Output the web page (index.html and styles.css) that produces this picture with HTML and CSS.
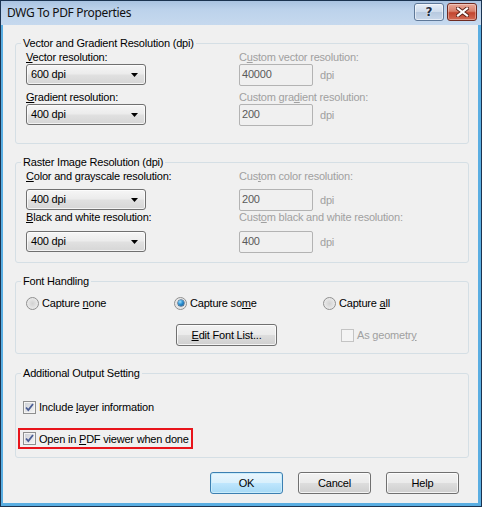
FILE: index.html
```html
<!DOCTYPE html>
<html>
<head>
<meta charset="utf-8">
<link rel="stylesheet" href="styles.css">
</head>
<body>
<div class="window">
  <div class="titlebar">
    <span class="title">DWG To PDF Properties</span>
    <div class="caption-btns">
      <div class="cbtn help"><span>?</span></div>
      <div class="cbtn close">
        <svg width="13" height="10" viewBox="0 0 13 10"><path d="M2 1.5L11 8.5M11 1.5L2 8.5" stroke="#5a2218" stroke-width="4" stroke-linecap="square"/><path d="M2 1.5L11 8.5M11 1.5L2 8.5" stroke="#fff" stroke-width="2.2" stroke-linecap="square"/></svg>
      </div>
    </div>
  </div>
  <div class="client">
    <fieldset class="group g1">
      <legend>Vector and Gradient Resolution (dpi)</legend>
      <div class="res-grid rows1">
        <div class="lbl end"><u>V</u>ector resolution:</div>
        <div class="lbl end dis">C<u>u</u>stom vector resolution:</div>
        <div class="combo"><span>600 dpi</span><svg width="7" height="4" viewBox="0 0 7 4"><path d="M0 0H7L3.5 4Z" fill="#000"/></svg></div>
        <div class="custom"><div class="edit">40000</div><span class="unit">dpi</span></div>
        <div class="lbl end"><u>G</u>radient resolution:</div>
        <div class="lbl end dis">Custom gra<u>d</u>ient resolution:</div>
        <div class="combo"><span>400 dpi</span><svg width="7" height="4" viewBox="0 0 7 4"><path d="M0 0H7L3.5 4Z" fill="#000"/></svg></div>
        <div class="custom"><div class="edit">200</div><span class="unit">dpi</span></div>
      </div>
    </fieldset>

    <fieldset class="group g2">
      <legend>Raster Image Resolution (dpi)</legend>
      <div class="res-grid rows2">
        <div class="lbl top1"><u>C</u>olor and grayscale resolution:</div>
        <div class="lbl top1 dis">Cus<u>t</u>om color resolution:</div>
        <div class="combo"><span>400 dpi</span><svg width="7" height="4" viewBox="0 0 7 4"><path d="M0 0H7L3.5 4Z" fill="#000"/></svg></div>
        <div class="custom"><div class="edit">200</div><span class="unit">dpi</span></div>
        <div class="lbl"><u>B</u>lack and white resolution:</div>
        <div class="lbl dis">Cust<u>o</u>m black and white resolution:</div>
        <div class="combo"><span>400 dpi</span><svg width="7" height="4" viewBox="0 0 7 4"><path d="M0 0H7L3.5 4Z" fill="#000"/></svg></div>
        <div class="custom"><div class="edit">400</div><span class="unit">dpi</span></div>
      </div>
    </fieldset>

    <fieldset class="group g3">
      <legend>Font Handling</legend>
      <div class="font-grid">
        <div class="opt"><span class="radio"></span><span>Capture <u>n</u>one</span></div>
        <div class="opt"><span class="radio on"></span><span>Capture so<u>m</u>e</span></div>
        <div class="opt"><span class="radio"></span><span>Capture <u>a</u>ll</span></div>
        <div></div>
        <div class="btn-cell"><div class="btn edit-font"><u>E</u>dit Font List...</div></div>
        <div class="geo-cell"><div class="opt dis"><span class="check off"></span><span>As geometr<u>y</u></span></div></div>
      </div>
    </fieldset>

    <fieldset class="group g4">
      <legend>Additional Output Setting</legend>
      <div class="opt row-a"><span class="check"><svg width="11" height="11" viewBox="0 0 11 11"><path d="M2 5.5L4.3 8L9 2" stroke="#4a5d94" stroke-width="1.8" fill="none"/></svg></span><span>Include <u>l</u>ayer information</span></div>
      <div class="opt row-b"><span class="check"><svg width="11" height="11" viewBox="0 0 11 11"><path d="M2 5.5L4.3 8L9 2" stroke="#4a5d94" stroke-width="1.8" fill="none"/></svg></span><span>Open in <u>P</u>DF viewer when done</span></div>
    </fieldset>

    <div class="actions">
      <div class="btn dlg default">OK</div>
      <div class="btn dlg">Cancel</div>
      <div class="btn dlg">Help</div>
    </div>
  </div>
</div>
</body>
</html>
```

FILE: styles.css
```css
* { box-sizing: border-box; }
html, body { margin: 0; padding: 0; }
body {
  font-family: "Liberation Sans", Arial, sans-serif;
  font-size: 11px;
  line-height: 13px;
  letter-spacing: -0.2px;
  color: #000;
  background: #ffffff;
}
u { text-decoration: underline; text-underline-offset: 1px; }

.window {
  width: 482px;
  height: 507px;
  border: 1px solid #1b3350;
  background: #5aaee2;
  display: flex;
  flex-direction: column;
}

.titlebar {
  height: 24px;
  flex: none;
  display: flex;
  align-items: flex-start;
  padding: 2px 4px 0 6px;
  background: linear-gradient(#a9c3e1 0%, #bcd2eb 35%, #c6d9ee 100%);
}
.title {
  font-family: "Noto Sans", "Open Sans", sans-serif;
  font-size: 12px;
  line-height: 16px;
  letter-spacing: -0.35px;
  margin-top: 2px;
  color: #111;
}
.caption-btns {
  margin-left: auto;
  display: flex;
  gap: 3px;
}
.cbtn {
  width: 30px;
  height: 18px;
  border-radius: 3px;
  display: flex;
  align-items: center;
  justify-content: center;
}
.cbtn.help {
  border: 1px solid #5e7898;
  background: linear-gradient(#e6eef8 0%, #cfdcec 48%, #b7c9df 52%, #c8d7ea 100%);
  box-shadow: inset 0 0 0 1px rgba(255,255,255,0.55);
}
.cbtn.help span {
  font-family: "DejaVu Sans", sans-serif;
  font-weight: bold;
  font-size: 12px;
  line-height: 12px;
  color: #1f2c40;
  text-shadow: 0 0 2px #fff;
}
.cbtn.close {
  border: 1px solid #6e2a20;
  background: linear-gradient(#eaa998 0%, #d8806c 45%, #c2442e 55%, #d36b55 100%);
  box-shadow: inset 0 0 0 1px rgba(255,255,255,0.35);
}

.client {
  flex: 1;
  margin: 0 3px 3px 2px;
  background: #f0f0f0;
  display: flex;
  flex-direction: column;
  padding-top: 12px;
}

.group {
  margin: 0 0 0 12px;
  width: 454px;
  border: 1px solid #d5dfe5;
  border-radius: 3px;
  padding: 0 10px 17px 10px;
  min-width: 0;
}
.group legend {
  padding: 0 2px;
  margin-left: -5px;
  line-height: 13px;
}
.g2 { margin-top: 12px; padding-bottom: 9px; }
.g3 { margin-top: 12px; padding-bottom: 7px; }
.g4 { margin-top: 13px; padding: 0 8px 8px 7px; }
.g4 legend { margin-left: -2px; }

.res-grid {
  display: grid;
  grid-template-columns: 213px 1fr;
}
.rows1 { grid-template-rows: 14px 22px 18px 22px; }
.rows2 { grid-template-rows: 20px 22px 20px 22px; }
.lbl { line-height: 13px; white-space: nowrap; align-self: start; }
.lbl.end { align-self: end; }
.lbl.top1 { margin-top: 1px; }
.dis { color: #a0a0a0; }

.combo {
  width: 120px;
  height: 21px;
  align-self: start;
  border: 1px solid #707070;
  border-radius: 3px;
  background: linear-gradient(#f6f6f6 0%, #ececec 45%, #e0e0e0 55%, #d6d6d6 100%);
  box-shadow: inset 0 0 0 1px rgba(255,255,255,0.7);
  display: flex;
  align-items: center;
  padding: 0 4px 0 4px;
}
.combo span { flex: 1; }
.combo svg { margin-right: 3px; }

.custom {
  display: flex;
  align-items: center;
  gap: 7px;
}
.edit {
  width: 74px;
  height: 22px;
  border: 1px solid #b3b3b3;
  border-radius: 2px;
  background: #f0f0f0;
  color: #5a5a5a;
  padding: 3px 2px 0 2px;
}
.unit { color: #a0a0a0; margin-top: 1px; }

.font-grid {
  display: grid;
  grid-template-columns: 148px 149px 1fr;
  grid-template-rows: 22px 22px;
  row-gap: 14px;
}
.opt {
  display: flex;
  align-items: center;
  gap: 3px;
  white-space: nowrap;
  line-height: 14px;
}
.font-grid > .opt { align-self: end; }
.radio {
  width: 13px;
  height: 13px;
  border-radius: 50%;
  border: 1px solid #8f8f8f;
  background: radial-gradient(circle at 50% 50%, #d2d2d2 0%, #e4e4e4 55%, #f6f6f6 100%);
  position: relative;
  flex: none;
}
.radio.on::after {
  content: "";
  position: absolute;
  left: 2.5px;
  top: 2.5px;
  width: 6px;
  height: 6px;
  border-radius: 50%;
  background: radial-gradient(circle at 35% 30%, #9be0ff 0%, #2a8ed0 45%, #0b4c87 100%);
  box-shadow: 0 0 0 0.5px #123f6c;
}
.btn-cell { display: flex; align-items: center; padding-left: 2px; }
.geo-cell { display: flex; align-items: center; padding-left: 18px; }

.check {
  width: 13px;
  height: 13px;
  border: 1px solid #8e8f8f;
  background: linear-gradient(135deg, #cbcfd5 0%, #f6f6f6 100%);
  box-shadow: inset 0 0 0 1px #f4f4f4;
  display: flex;
  align-items: center;
  justify-content: center;
  flex: none;
}
.check.off {
  border-color: #c4c4c4;
  background: #f4f4f4;
  box-shadow: none;
}
.opt.dis { color: #a0a0a0; }

.row-a { margin-top: 20px; }
.row-b {
  margin-top: 14px;
  margin-left: -5px;
  width: fit-content;
  height: 21px;
  border: 2px solid #e8141b;
  padding: 0 2px 0 3px;
}

.btn {
  border: 1px solid #707070;
  border-radius: 3px;
  background: linear-gradient(#f2f2f2 0%, #ebebeb 48%, #dddddd 52%, #cfcfcf 100%);
  box-shadow: inset 0 0 0 1px rgba(255,255,255,0.75);
  display: flex;
  align-items: center;
  justify-content: center;
  white-space: nowrap;
}
.edit-font { width: 101px; height: 22px; }

.actions {
  margin-top: 14px;
  display: flex;
  justify-content: flex-end;
  gap: 15px;
  padding-right: 19px;
}
.dlg { width: 73px; height: 22px; }
.dlg.default {
  border-color: #3c7fb1;
  background: linear-gradient(#eaf6fd 0%, #d9f0fc 48%, #bee6fd 52%, #a7d9f5 100%);
  box-shadow: inset 0 0 0 1px #c9ecfb;
}
```
